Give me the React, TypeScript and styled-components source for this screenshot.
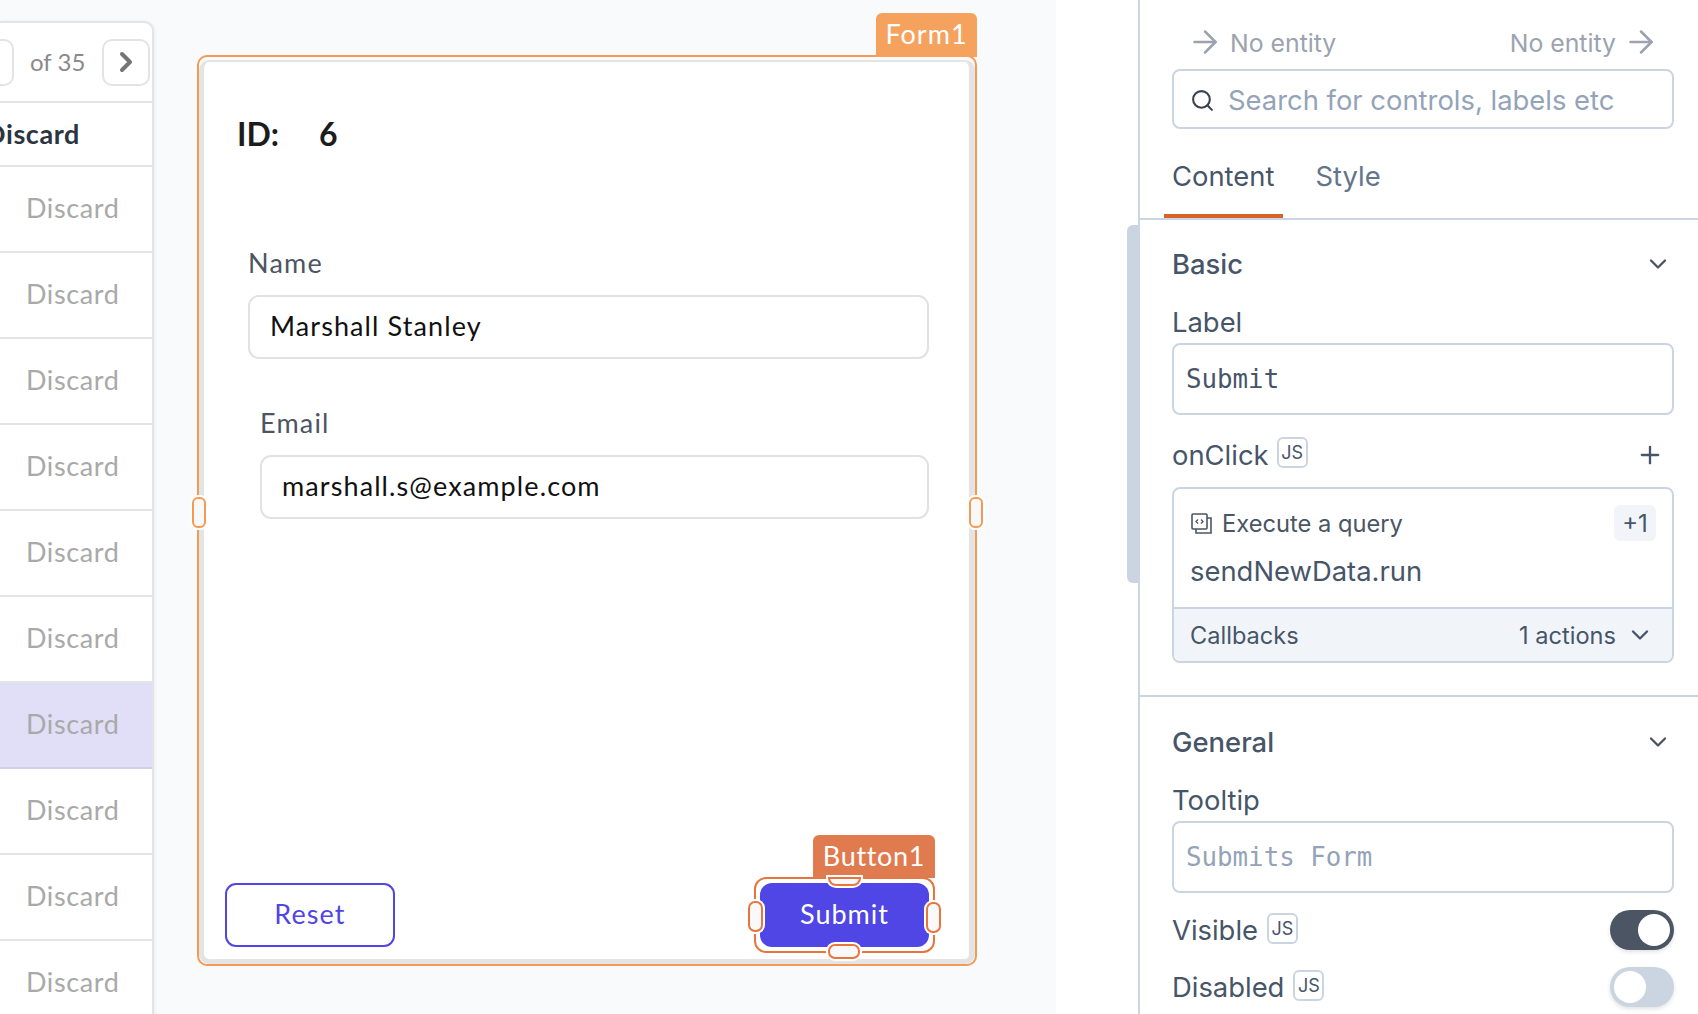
import React from "react";
import styled, { createGlobalStyle } from "styled-components";
import { ArrowRight, ChevronDown, ChevronRight, Plus, Search } from "lucide-react";

const GlobalStyle = createGlobalStyle`
  html, body {
    margin: 0;
    padding: 0;
    background: #fff;
  }
  * {
    box-sizing: border-box;
  }
`;

const canvasFont = `"Lato", "Noto Sans", sans-serif`;
const panelFont = `"Inter", "Liberation Sans", sans-serif`;
const monoFont = `"DejaVu Sans Mono", "Liberation Mono", monospace`;

const rows = Array.from({ length: 10 }, (_, i) => i);

const QueryIcon = () => (
  <svg width="21" height="21" viewBox="0 0 21 21" fill="none" stroke="#4b5563" strokeWidth="1.6">
    <rect x="1" y="1" width="15" height="15" rx="1" />
    <path d="M16 5h4v15H5v-4" />
    <path d="M7 6.5 5 8.5l2 2M10 6.5l2 2-2 2" strokeWidth="1.3" />
  </svg>
);

const App: React.FC = () => (
  <Page>
    <GlobalStyle />
    <Canvas>
      <TableCard>
        <Pager>
          <PageInput />
          <PageCount>of 35</PageCount>
          <NextButton>
            <ChevronRight size={32} strokeWidth={3} />
          </NextButton>
        </Pager>
        <HeadRow>Discard</HeadRow>
        {rows.map((r) => (
          <BodyRow key={r} $selected={r === 6}>Discard</BodyRow>
        ))}
      </TableCard>
      <FormSelection>
        <FormTag>Form1</FormTag>
        <FormHandle $side="left" />
        <FormHandle $side="right" />
        <FormCard>
          <IdRow>
            <span>ID:</span>
            <span>6</span>
          </IdRow>
          <Field $inset={44} $top={92}>
            <FieldLabel>Name</FieldLabel>
            <TextBox>Marshall Stanley</TextBox>
          </Field>
          <Field $inset={56} $top={47}>
            <FieldLabel>Email</FieldLabel>
            <TextBox>marshall.s@example.com</TextBox>
          </Field>
          <FormFooter>
            <ResetButton>Reset</ResetButton>
            <SubmitWrap>
              <WidgetTag>Button1</WidgetTag>
              <WidgetOutline />
              <ButtonHandle $side="top" />
              <ButtonHandle $side="bottom" />
              <ButtonHandle $side="left" />
              <ButtonHandle $side="right" />
              <SubmitButton>Submit</SubmitButton>
            </SubmitWrap>
          </FormFooter>
        </FormCard>
      </FormSelection>
    </Canvas>
    <Gutter>
      <ScrollThumb />
    </Gutter>
    <Panel>
      <EntityRow>
        <EntityLink>
          <ArrowRight size={36} strokeWidth={1.7} />
          <EntityText>No entity</EntityText>
        </EntityLink>
        <EntityLink>
          <EntityText>No entity</EntityText>
          <ArrowRight size={36} strokeWidth={1.7} />
        </EntityLink>
      </EntityRow>
      <SearchBox>
        <Search size={25} strokeWidth={2} color="#374151" />
        <SearchText>Search for controls, labels etc</SearchText>
      </SearchBox>
      <Tabs>
        <Tab $active>Content</Tab>
        <Tab>Style</Tab>
      </Tabs>
      <Section>
        <SectionHead>
          <SectionTitle>Basic</SectionTitle>
          <ChevronDown size={28} strokeWidth={2} color="#4b5563" />
        </SectionHead>
        <PropLabel>Label</PropLabel>
        <CodeBox>Submit</CodeBox>
        <PropRow>
          <PropName>onClick</PropName>
          <JsBadge>JS</JsBadge>
          <AddButton>
            <Plus size={28} strokeWidth={2} />
          </AddButton>
        </PropRow>
        <ActionCard>
          <ActionBody>
            <ActionTop>
              <QueryIcon />
              <ActionKind>Execute a query</ActionKind>
              <CountBadge>+1</CountBadge>
            </ActionTop>
            <ActionCode>sendNewData.run</ActionCode>
          </ActionBody>
          <ActionFoot>
            <span>Callbacks</span>
            <FootRight>
              1 actions
              <ChevronDown size={28} strokeWidth={2} />
            </FootRight>
          </ActionFoot>
        </ActionCard>
      </Section>
      <Section>
        <SectionHead>
          <SectionTitle>General</SectionTitle>
          <ChevronDown size={28} strokeWidth={2} color="#4b5563" />
        </SectionHead>
        <PropLabel>Tooltip</PropLabel>
        <CodeBox $muted>Submits Form</CodeBox>
        <ToggleRow>
          <PropName>Visible</PropName>
          <JsBadge $lift={4}>JS</JsBadge>
          <Toggle $on />
        </ToggleRow>
        <ToggleRow>
          <PropName>Disabled</PropName>
          <JsBadge $lift={4}>JS</JsBadge>
          <Toggle />
        </ToggleRow>
      </Section>
    </Panel>
  </Page>
);

const Page = styled.div`
  display: flex;
  width: 1698px;
  height: 1014px;
  overflow: hidden;
  background: #fff;
`;

const Canvas = styled.div`
  display: flex;
  align-items: flex-start;
  width: 1056px;
  height: 1014px;
  background: #f9fafb;
  font-family: ${canvasFont};
`;

const TableCard = styled.div`
  width: 154px;
  height: 1100px;
  margin-top: 21px;
  background: #fff;
  border-top: 2px solid #e4e4e4;
  border-right: 2px solid #e4e4e4;
  border-top-right-radius: 10px;
  flex-shrink: 0;
  box-shadow: 1px 0 3px rgba(0, 0, 0, 0.06);
`;

const Pager = styled.div`
  display: flex;
  align-items: center;
  height: 80px;
  padding-right: 2px;
  border-bottom: 2px solid #e4e4e4;
`;

const PageInput = styled.div`
  width: 14px;
  height: 47px;
  background: #fff;
  border: 2px solid #e4e4e4;
  border-left: 0;
  border-radius: 0 10px 10px 0;
`;

const PageCount = styled.span`
  width: 88px;
  padding: 0 0 2px 16px;
  font-size: 24px;
  color: #8a8a8a;
`;

const NextButton = styled.div`
  display: flex;
  align-items: center;
  justify-content: center;
  width: 48px;
  height: 47px;
  color: #757575;
  border: 2px solid #e4e4e4;
  border-radius: 10px;
`;

const HeadRow = styled.div`
  display: flex;
  align-items: center;
  justify-content: flex-end;
  height: 64px;
  padding: 0 72px 2px 0;
  font-size: 27px;
  font-weight: 700;
  letter-spacing: 0.6px;
  color: #2b3440;
  white-space: nowrap;
  border-bottom: 2px solid #e4e4e4;
`;

const BodyRow = styled.div<{ $selected?: boolean }>`
  display: flex;
  align-items: center;
  height: 86px;
  padding-left: 26px;
  padding-bottom: 4px;
  font-size: 27px;
  letter-spacing: 0.6px;
  color: #a9a9a9;
  background: ${(p) => (p.$selected ? "#e0dff7" : "#fff")};
  border-bottom: 2px solid ${(p) => (p.$selected ? "#d2d0e8" : "#e4e4e4")};
`;

const FormSelection = styled.div`
  position: relative;
  width: 780px;
  height: 911px;
  margin-top: 55px;
  margin-left: 43px;
  padding-top: 3px;
  border: 2px solid #f49a55;
  border-radius: 10px;
  flex-shrink: 0;
`;

const FormTag = styled.div`
  position: absolute;
  top: -44px;
  right: -2px;
  width: 101px;
  height: 44px;
  display: flex;
  align-items: center;
  justify-content: center;
  padding-bottom: 3px;
  font-size: 27px;
  letter-spacing: 1px;
  color: #fff;
  background: #f5a25f;
  border-radius: 6px 6px 0 0;
`;

const FormHandle = styled.div<{ $side: "left" | "right" }>`
  position: absolute;
  top: 440px;
  ${(p) => (p.$side === "left" ? "left: -7px;" : "right: -8px;")}
  width: 14px;
  height: 31px;
  background: #f9f9f9;
  border: 2px solid #f49a55;
  border-radius: 6px;
  box-shadow: 0 0 0 2px #fff;
  z-index: 2;
`;

const FormCard = styled.div`
  display: flex;
  flex-direction: column;
  height: 100%;
  background: #fff;
  border-style: solid;
  border-color: #e4e4e4;
  border-width: 2px 6px 5px 5px;
  border-radius: 10px;
`;

const IdRow = styled.div`
  display: flex;
  gap: 40px;
  margin: 52px 0 0 33px;
  font-size: 32px;
  line-height: 40px;
  font-weight: 700;
  color: #1c1c1c;
`;

const Field = styled.div<{ $inset: number; $top: number }>`
  margin: ${(p) => p.$top}px 40px 0 ${(p) => p.$inset}px;
`;

const FieldLabel = styled.div`
  font-size: 27px;
  line-height: 34px;
  letter-spacing: 1.2px;
  color: #4b5563;
  margin-bottom: 15px;
`;

const TextBox = styled.div`
  display: flex;
  align-items: center;
  height: 64px;
  padding: 0 0 3px 20px;
  font-size: 27px;
  letter-spacing: 1.1px;
  color: #111;
  background: #fff;
  border: 2px solid #e2e2e2;
  border-radius: 11px;
`;

const FormFooter = styled.div`
  display: flex;
  justify-content: space-between;
  align-items: flex-end;
  margin-top: auto;
  padding: 0 40px 12px 21px;
`;

const ResetButton = styled.div`
  display: flex;
  align-items: center;
  justify-content: center;
  width: 170px;
  height: 64px;
  padding-bottom: 3px;
  font-size: 27px;
  letter-spacing: 1.1px;
  color: #4f46e5;
  background: #fff;
  border: 2px solid #4f46e5;
  border-radius: 11px;
`;

const SubmitWrap = styled.div`
  position: relative;
`;

const SubmitButton = styled.div`
  position: relative;
  display: flex;
  align-items: center;
  justify-content: center;
  width: 169px;
  height: 64px;
  padding-bottom: 3px;
  font-size: 27px;
  letter-spacing: 1px;
  color: #fff;
  background: #4f46e5;
  border-radius: 12px;
`;

const WidgetOutline = styled.div`
  position: absolute;
  inset: -6px -6px -6px -6px;
  border: 2px solid #e8743e;
  border-radius: 12px;
`;

const WidgetTag = styled.div`
  position: absolute;
  top: -48px;
  right: -6px;
  width: 122px;
  height: 43px;
  display: flex;
  align-items: center;
  justify-content: center;
  padding-bottom: 2px;
  font-size: 27px;
  letter-spacing: 0.7px;
  color: #fff;
  background: #e07b4f;
  border-radius: 6px 6px 0 0;
  z-index: 1;
`;

const handlePlace = {
  top: "top: -6px; left: 68px; width: 33px; height: 9px; border-radius: 0 0 8px 8px; border-top: 0;",
  bottom: "bottom: -12px; left: 68px; width: 32px; height: 15px; border-radius: 7px;",
  left: "left: -12px; top: 18px; width: 15px; height: 31px; border-radius: 7px;",
  right: "right: -12px; top: 19px; width: 15px; height: 31px; border-radius: 7px;",
};

const ButtonHandle = styled.div<{ $side: keyof typeof handlePlace }>`
  position: absolute;
  ${(p) => handlePlace[p.$side]}
  background: #f9f9f9;
  border: 2px solid #e8743e;
  box-shadow: 0 0 0 2px #fff;
  z-index: 2;
`;

const Gutter = styled.div`
  display: flex;
  justify-content: flex-end;
  width: 82px;
  height: 1014px;
  flex-shrink: 0;
`;

const ScrollThumb = styled.div`
  width: 11px;
  height: 358px;
  margin-top: 225px;
  background: #cbd5e1;
  border-radius: 6px 0 0 6px;
`;

const Panel = styled.div`
  width: 560px;
  height: 1014px;
  padding-top: 22px;
  font-family: ${panelFont};
  color: #475569;
  background: #fff;
  border-left: 2px solid #cbd5e1;
  flex-shrink: 0;
`;

const EntityRow = styled.div`
  display: flex;
  justify-content: space-between;
  height: 40px;
  margin: 0 39px 0 47px;
`;

const EntityLink = styled.div`
  display: flex;
  align-items: center;
  gap: 7px;
  height: 40px;
  color: #9ca3af;
`;

const EntityText = styled.span`
  padding-top: 2px;
  font-size: 24.8px;
`;

const SearchBox = styled.div`
  display: flex;
  align-items: center;
  gap: 13px;
  height: 60px;
  margin: 7px 24px 0 32px;
  padding: 2px 0 0 16px;
  border: 2px solid #cbd5e1;
  border-radius: 8px;
`;

const SearchText = styled.span`
  font-size: 27.4px;
  color: #94a3b8;
`;

const Tabs = styled.div`
  display: flex;
  gap: 41px;
  height: 91px;
  padding-left: 32px;
  border-bottom: 2px solid #cbd5e1;
`;

const Tab = styled.div<{ $active?: boolean }>`
  position: relative;
  padding-top: 27px;
  font-size: 27.4px;
  line-height: 40px;
  color: ${(p) => (p.$active ? "#475569" : "#64748b")};

  ${(p) =>
    p.$active &&
    `
    &::after {
      content: "";
      position: absolute;
      left: -8px;
      right: -9px;
      bottom: 0;
      height: 4px;
      background: #d9622b;
    }
  `}
`;

const Section = styled.section`
  padding: 24px 24px 0 32px;

  & + & {
    padding-top: 25px;
    margin-top: 32px;
    border-top: 2px solid #cbd5e1;
  }
`;

const SectionHead = styled.div`
  display: flex;
  align-items: center;
  justify-content: space-between;
  height: 40px;
  padding-right: 2px;
`;

const SectionTitle = styled.div`
  font-size: 27.4px;
  font-weight: 500;
  color: #475569;
`;

const PropLabel = styled.div`
  margin-top: 18px;
  margin-bottom: 1px;
  font-size: 27.4px;
  line-height: 40px;
`;

const CodeBox = styled.div<{ $muted?: boolean }>`
  display: flex;
  align-items: center;
  height: 72px;
  padding-left: 12px;
  font-family: ${monoFont};
  font-size: 25.8px;
  color: ${(p) => (p.$muted ? "#94a3b8" : "#475569")};
  border: 2px solid #cbd5e1;
  border-radius: 8px;
`;

const PropRow = styled.div`
  display: flex;
  align-items: center;
  gap: 8px;
  height: 40px;
  margin-top: 20px;
`;

const PropName = styled.span`
  font-size: 27.4px;
  line-height: 40px;
`;

const JsBadge = styled.span<{ $lift?: number }>`
  display: flex;
  align-items: center;
  justify-content: center;
  width: 31px;
  height: 31px;
  margin-top: ${(p) => -(p.$lift ?? 5)}px;
  font-size: 18px;
  color: #475569;
  border: 2px solid #cbd5e1;
  border-radius: 6px;
`;

const AddButton = styled.span`
  display: flex;
  margin-left: auto;
  padding-right: 10px;
`;

const ActionCard = styled.div`
  margin-top: 12px;
  border: 2px solid #cbd5e1;
  border-radius: 8px;
  overflow: hidden;
`;

const ActionBody = styled.div`
  height: 118px;
  padding: 16px 16px 0 16px;
`;

const ActionTop = styled.div`
  display: flex;
  align-items: center;
  gap: 10px;
  height: 36px;
  padding-left: 1px;
`;

const ActionKind = styled.span`
  font-size: 23.7px;
  color: #4b5563;
`;

const CountBadge = styled.span`
  display: flex;
  align-items: center;
  justify-content: center;
  width: 42px;
  height: 36px;
  margin-left: auto;
  font-size: 24px;
  background: #f1f5f9;
  border-radius: 6px;
`;

const ActionCode = styled.div`
  margin-top: 10px;
  font-size: 27.4px;
  line-height: 40px;
`;

const ActionFoot = styled.div`
  display: flex;
  align-items: center;
  justify-content: space-between;
  height: 54px;
  padding: 0 18px 0 16px;
  font-size: 23.6px;
  background: #f1f5f9;
  border-top: 2px solid #cbd5e1;
`;

const FootRight = styled.span`
  display: flex;
  align-items: center;
  gap: 10px;
`;

const ToggleRow = styled.div`
  display: flex;
  align-items: center;
  gap: 9px;
  height: 40px;
  margin-top: 17px;
`;

const Toggle = styled.div<{ $on?: boolean }>`
  position: relative;
  width: 64px;
  height: 40px;
  margin-left: auto;
  background: ${(p) => (p.$on ? "#4b5563" : "#cbd5e1")};
  border-radius: 20px;
  box-shadow: 0 2px 4px rgba(0, 0, 0, 0.12);

  &::after {
    content: "";
    position: absolute;
    top: 4px;
    left: ${(p) => (p.$on ? "28px" : "4px")};
    width: 32px;
    height: 32px;
    background: #fff;
    border-radius: 50%;
  }
`;

export default App;
